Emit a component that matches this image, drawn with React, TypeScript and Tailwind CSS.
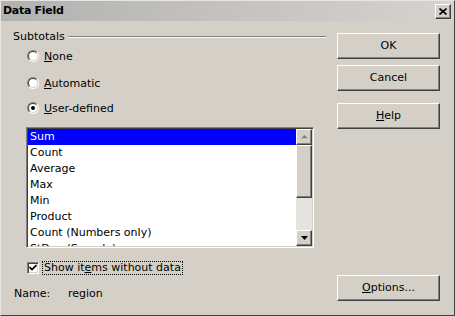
import React from "react";

const raised =
  "border border-t-white border-l-white border-r-[#404040] border-b-[#404040] shadow-[inset_-1px_-1px_0_#808080]";
const sunken =
  "border border-t-[#808080] border-l-[#808080] border-r-white border-b-white shadow-[inset_1px_1px_0_#404040,inset_-1px_-1px_0_#d4d0c8]";

const items = [
  "Sum",
  "Count",
  "Average",
  "Max",
  "Min",
  "Product",
  "Count (Numbers only)",
  "StDev (Sample)",
];

function Radio({ checked, children }: { checked?: boolean; children: React.ReactNode }) {
  return (
    <div className="flex items-center h-[12px] pl-[26px]">
      <div className="w-[12px] h-[12px] rounded-full border border-t-[#808080] border-l-[#808080] border-r-white border-b-white">
        <div className="w-full h-full rounded-full bg-white border border-t-[#404040] border-l-[#404040] border-r-[#d4d0c8] border-b-[#d4d0c8] flex items-center justify-center">
          {checked && <div className="w-[4px] h-[4px] rounded-full bg-black" />}
        </div>
      </div>
      <span className="ml-[5px] leading-[13px]">{children}</span>
    </div>
  );
}

function Button({ className, children }: { className?: string; children: React.ReactNode }) {
  return (
    <div className={`w-[103px] h-[26px] flex items-center justify-center bg-[#d4d0c8] ${raised} ${className ?? ""}`}>
      {children}
    </div>
  );
}

export default function App() {
  return (
    <div className="w-[455px] h-[316px] bg-[#d4d0c8] text-black text-[11px] font-['DejaVu_Sans',sans-serif] border border-t-[#e8e6e2] border-l-[#e8e6e2] border-r-[#404040] border-b-[#404040] flex flex-col overflow-hidden">
      {/* Title bar */}
      <div className="h-[20px] flex items-center pl-[2px] pr-[3px] bg-linear-to-r from-[#b2b2b2] to-[#d6d3ce]">
        <span className="font-bold text-[11px] tracking-[-0.3px]">Data Field</span>
        <div className={`ml-auto w-[16px] h-[15px] flex items-center justify-center bg-[#d4d0c8] ${raised}`}>
          <svg width="8" height="7" viewBox="0 0 8 7">
            <path d="M0.5 0.5 L7.5 6.5 M7.5 0.5 L0.5 6.5" stroke="black" strokeWidth="1.6" />
          </svg>
        </div>
      </div>

      <div className="flex flex-1">
        {/* Left column */}
        <div className="w-[325px] flex flex-col">
          <div className="mt-[9px] pl-[12px] h-[13px] flex items-center">
            <span className="leading-[13px]">Subtotals</span>
            <div className="flex-1 ml-[3px] h-[2px] border-t border-t-[#808080] border-b border-b-white" />
          </div>

          <div className="mt-[7px]">
            <Radio>
              <u>N</u>one
            </Radio>
          </div>
          <div className="mt-[15px]">
            <Radio>
              <u>A</u>utomatic
            </Radio>
          </div>
          <div className="mt-[13px]">
            <Radio checked>
              <u>U</u>ser-defined
            </Radio>
          </div>

          {/* List box */}
          <div className={`mt-[13px] ml-[25px] w-[288px] h-[121px] bg-white flex overflow-hidden ${sunken} p-[1px]`}>
            <div className="flex-1 flex flex-col overflow-hidden">
              {items.map((it, i) => (
                <div
                  key={it}
                  className={`h-[16px] shrink-0 flex items-center pl-[2px] pt-[1px] whitespace-nowrap ${
                    i === 0 ? "bg-[#0000ff] text-white" : ""
                  }`}
                >
                  {it}
                </div>
              ))}
            </div>
            {/* Scrollbar */}
            <div className="w-[16px] flex flex-col bg-[#e6e4e0]">
              <div className={`h-[16px] bg-[#d4d0c8] flex items-center justify-center ${raised}`}>
                <svg width="7" height="5" viewBox="0 0 7 5">
                  <path d="M4 1 L7 4 L1 4 Z" fill="white" />
                  <path d="M3.5 0 L7 3.5 L0 3.5 Z" fill="#808080" />
                </svg>
              </div>
              <div className={`h-[53px] bg-[#d4d0c8] ${raised}`} />
              <div className="flex-1" />
              <div className={`h-[16px] bg-[#d4d0c8] flex items-center justify-center ${raised}`}>
                <svg width="7" height="4" viewBox="0 0 7 4">
                  <path d="M0 0 L7 0 L3.5 4 Z" fill="black" />
                </svg>
              </div>
            </div>
          </div>

          {/* Checkbox */}
          <div className="mt-[13px] pl-[26px] flex items-center h-[13px]">
            <div className={`w-[12px] h-[12px] bg-white flex items-center justify-center ${sunken}`}>
              <svg width="8" height="7" viewBox="0 0 8 7">
                <path d="M0.5 3 L3 5.5 L7.5 1" stroke="black" strokeWidth="1.7" fill="none" />
              </svg>
            </div>
            <span className="ml-[3px] px-[1px] border border-dotted border-black leading-[12px]">
              Show it<u>e</u>ms without data
            </span>
          </div>

          <div className="mt-[14px] pl-[13px] flex items-center h-[13px]">
            <span className="w-[54px]">Name:</span>
            <span>region</span>
          </div>
        </div>

        {/* Right column */}
        <div className="pl-[11px] flex flex-col">
          <Button className="mt-[12px]">OK</Button>
          <Button className="mt-[6px]">Cancel</Button>
          <Button className="mt-[12px]">
            <span>
              <u>H</u>elp
            </span>
          </Button>
          <Button className="mt-[146px]">
            <span>
              <u>O</u>ptions...
            </span>
          </Button>
        </div>
      </div>
    </div>
  );
}
